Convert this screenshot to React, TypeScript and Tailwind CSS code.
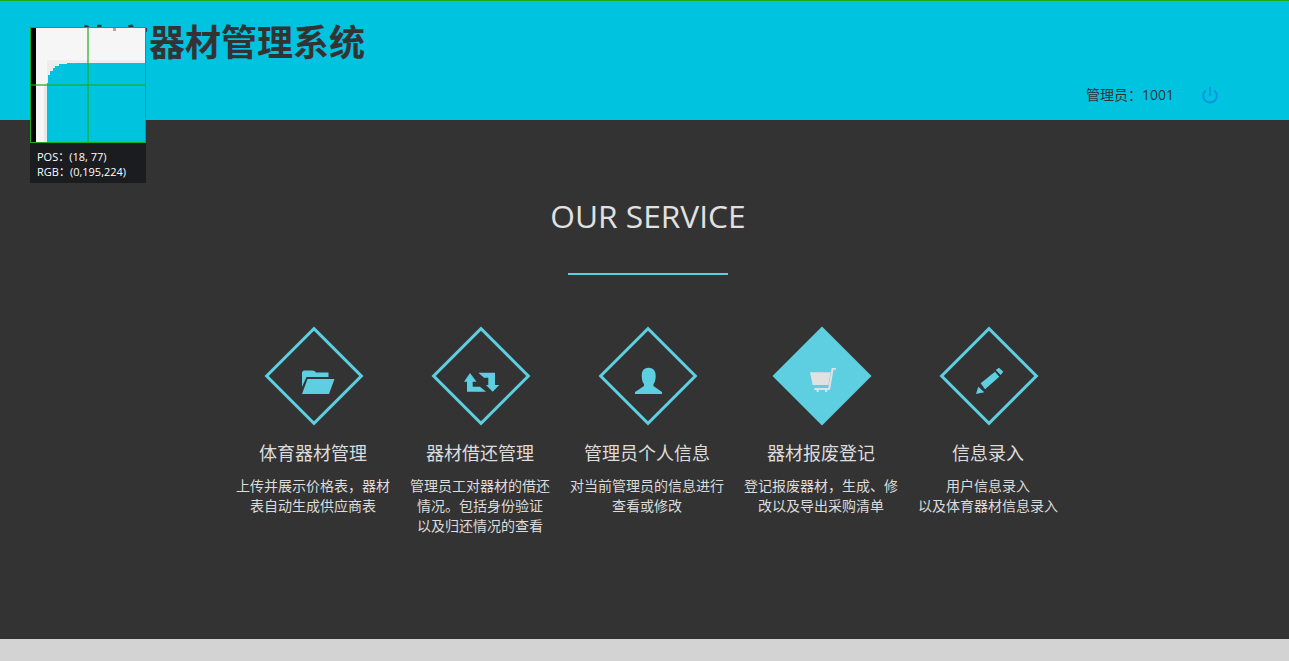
import { Power } from 'lucide-react'
import type { ReactNode } from 'react'

const cn = '"Open Sans", "Noto Sans CJK SC", sans-serif'

interface Service {
  title: string
  lines: string[]
  filled?: boolean
  iconClass: string
  icon: ReactNode
}

const services: Service[] = [
  {
    title: '体育器材管理',
    lines: ['上传并展示价格表，器材', '表自动生成供应商表'],
    iconClass: 'left-[36px] top-[42px]',
    icon: (
      <svg width="35" height="26" viewBox="0 0 35 26" fill="#5dcfe0">
        <path d="M1 4Q1 1.5 3.5 1.5H11Q14 1.5 15 3.5H27.5V8H5.5L1 18Z" />
        <path d="M6.5 10H33.5L28 25H1Z" />
      </svg>
    ),
  },
  {
    title: '器材借还管理',
    lines: ['管理员工对器材的借还', '情况。包括身份验证', '以及归还情况的查看'],
    iconClass: 'left-[32px] top-[43px]',
    icon: (
      <svg width="36" height="24" viewBox="0 0 36 24" fill="#5dcfe0">
        <path d="M6 3L12.5 11.7H8.7V16.7H16L22 21.7H3V11.7H0Z" />
        <path d="M14.3 2.7H31V15H35.3L28.7 21.7L22 15H24.3V7.7H20Z" />
      </svg>
    ),
  },
  {
    title: '管理员个人信息',
    lines: ['对当前管理员的信息进行', '查看或修改'],
    iconClass: 'left-[35px] top-[39px]',
    icon: (
      <svg width="30" height="30" viewBox="0 0 30 30" fill="#5dcfe0">
        <path d="M14.7 1.7C9 1.7 7.7 5.5 7.7 10C7.7 14 9 17 10 18V20L1 26V28H28V26L19.5 20V18C20.5 17 21.7 14 21.7 10C21.7 5.5 20 1.7 14.7 1.7Z" />
      </svg>
    ),
  },
  {
    title: '器材报废登记',
    lines: ['登记报废器材，生成、修', '改以及导出采购清单'],
    filled: true,
    iconClass: 'left-[36px] top-[39px]',
    icon: (
      <svg width="28" height="28" viewBox="0 0 28 28" fill="#e1e1e1">
        <path d="M1 6.3H21.7L19.3 19H3.7Z" />
        <path d="M22.7 2H27V3.8H24.5L21 24H5.3V22H19.2Z" />
        <rect x="7.7" y="24" width="2" height="2" />
        <rect x="16" y="24" width="2.3" height="2" />
      </svg>
    ),
  },
  {
    title: '信息录入',
    lines: ['用户信息录入', '以及体育器材信息录入'],
    iconClass: 'left-[35px] top-[39px]',
    icon: (
      <svg width="30" height="30" viewBox="0 0 30 30" fill="#5dcfe0">
        <path d="M1 28L3.3 20.7L9.3 26.3Z" />
        <path d="M5.7 17.3L20 5.7L24.3 10.7L10 23.3Z" />
        <path d="M20.7 4L24 1.7L28.3 5.7L25.7 9Z" />
      </svg>
    ),
  },
]

function ServiceItem({ service }: { service: Service }) {
  return (
    <div className="flex flex-col items-center">
      <div className="relative flex h-[98px] w-[98px] items-center justify-center">
        <div
          className={
            service.filled
              ? 'h-[70px] w-[70px] rotate-45 bg-[#5dcfe0]'
              : 'h-[70px] w-[70px] rotate-45 border-[3px] border-[#5dcfe0]'
          }
        />
        <div className={'absolute ' + service.iconClass}>{service.icon}</div>
      </div>
      <h3 className="mt-[15px] -translate-x-px text-[18px] leading-[26px] font-normal text-[#dcdcdc]">{service.title}</h3>
      <div className="mt-[10px] -translate-x-px text-center text-[14px] leading-[20px] text-[#dcdcdc]">
        {service.lines.map((line) => (
          <p key={line} className="whitespace-nowrap">{line}</p>
        ))}
      </div>
    </div>
  )
}

// screenshot tool's magnifier, it sits on top of the page
function Magnifier() {
  return (
    <div className="absolute left-[30px] top-[27px] w-[116px]">
      <div className="relative h-[116px] overflow-hidden border border-[#1aad19] bg-[#00c3e0]">
        <svg className="absolute left-0 top-0" width="114" height="114" viewBox="0 0 114 114" shapeRendering="crispEdges">
          <rect x="0" y="0" width="5" height="114" fill="#000" />
          <rect x="5" y="0" width="109" height="35" fill="#f6f6f6" />
          <rect x="5" y="0" width="11" height="114" fill="#f6f6f6" />
          <rect x="16" y="32" width="98" height="3" fill="#eeeeee" />
          <rect x="13" y="55" width="3" height="59" fill="#e8e8e8" />
          <path d="M16 35H36V36H28V38H24V40H22V43H19V47H17V55H16Z" fill="#ececec" />
          <rect x="82" y="0" width="3" height="3" fill="#aaaaaa" />
        </svg>
        <div className="absolute left-[56px] top-0 h-full w-[2px] bg-[#1aad19]/60" />
        <div className="absolute left-0 top-[56px] h-[2px] w-full bg-[#1aad19]/60" />
      </div>
      <div className="h-[40px] bg-[#1a1c20] px-[7px] pt-[6px] text-[11px] leading-[15px] text-white">
        <div>POS：(18, 77)</div>
        <div>RGB：(0,195,224)</div>
      </div>
    </div>
  )
}

export default function App() {
  return (
    <div className="relative flex h-[661px] flex-col overflow-hidden bg-[#d3d3d3]" style={{ fontFamily: cn }}>
      <header className="h-[120px] border-t border-[#1aad19] bg-[#00c3e0] text-[#333333]">
        <h1 className="pl-[77px] pt-[18px] text-[36px] leading-[48px] font-bold">体育器材管理系统</h1>
        <div className="mt-[18px] flex items-center justify-end pr-[70px]">
          <span className="text-[14px] leading-[20px]">管理员：1001</span>
          <Power className="ml-[27px] h-[18px] w-[18px] text-[#0e96dc]" strokeWidth={2.6} />
        </div>
      </header>

      <main className="flex h-[519px] flex-col items-center bg-[#333333] pl-[7px] pt-[76px]">
        <h2 className="text-[31.7px] leading-[40px] font-normal text-[#e1e1e1]">OUR SERVICE</h2>
        <div className="mt-[37px] h-[2px] w-[160px] bg-[#5dcfe0]" />
        <div className="mt-[52px] flex justify-center gap-5">
          {services.map((service) => (
            <ServiceItem key={service.title} service={service} />
          ))}
        </div>
      </main>

      <Magnifier />
    </div>
  )
}
